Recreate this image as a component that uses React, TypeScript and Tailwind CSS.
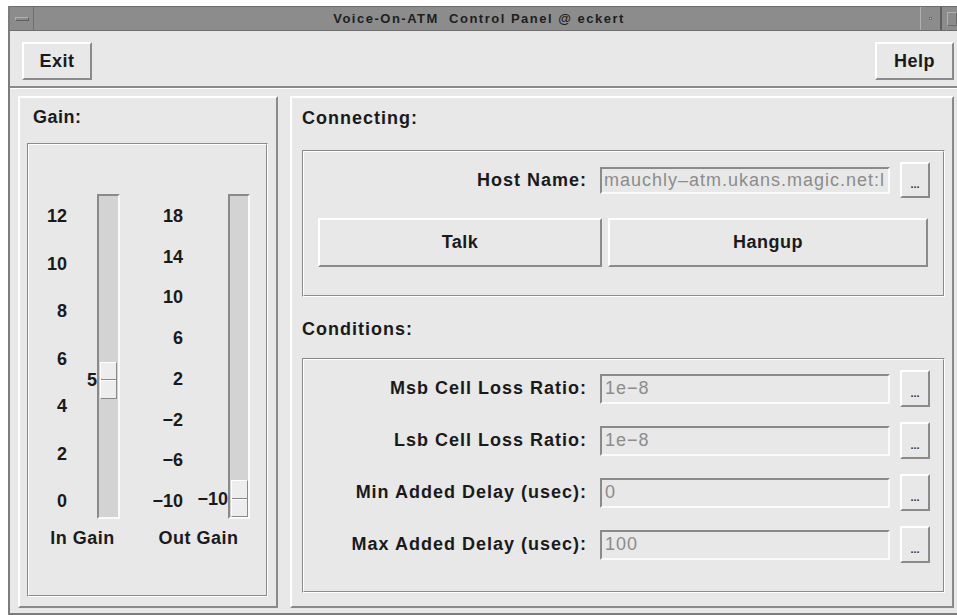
import React from "react";

const raised =
  "border-2 border-t-white border-l-white border-b-[#8a8a8a] border-r-[#8a8a8a]";
const sunken =
  "border-2 border-t-[#8a8a8a] border-l-[#8a8a8a] border-b-[#fafafa] border-r-[#fafafa]";

function Groove({ className = "", children }: { className?: string; children?: React.ReactNode }) {
  return (
    <div className={`border border-t-[#8a8a8a] border-l-[#8a8a8a] border-b-white border-r-white ${className}`}>
      <div className="h-full border border-t-white border-l-white border-b-[#8a8a8a] border-r-[#8a8a8a]">
        {children}
      </div>
    </div>
  );
}

function Trough({
  value,
  min,
  max,
  valueText,
  widthClass,
  thumbClass,
}: {
  value: number;
  min: number;
  max: number;
  valueText: string;
  widthClass: string;
  thumbClass: string;
}) {
  const travel = 321 - 37;
  const top = ((max - value) / (max - min)) * travel;
  return (
    <div className={`relative h-[325px] ${widthClass} ${sunken} bg-[#d3d3d3]`}>
      <div
        className="absolute right-full mr-[2px] h-[37px] flex items-center text-[18px] font-bold leading-none text-[#1a1a1a]"
        style={{ top }}
      >
        {valueText}
      </div>
      <div
        className={`absolute ${thumbClass} h-[37px] bg-[#ededed] border border-t-white border-l-white border-b-[#8a8a8a] border-r-[#8a8a8a] flex flex-col justify-center`}
        style={{ top }}
      >
        <div className="h-[2px] border-t border-t-[#8a8a8a] border-b border-b-white" />
      </div>
    </div>
  );
}

function ScaleLabels({ labels, widthClass }: { labels: string[]; widthClass: string }) {
  return (
    <div className={`${widthClass} mt-[12px] h-[306px] flex flex-col justify-between text-right`}>
      {labels.map((l) => (
        <div key={l} className="leading-[21px] text-[18px] font-bold text-[#1a1a1a]">
          {l}
        </div>
      ))}
    </div>
  );
}

function DotsButton({ h }: { h: string }) {
  return (
    <div className={`ml-[10px] w-[30px] ${h} ${raised} bg-[#e8e8e8] flex items-end justify-center pb-[6px]`}>
      <span className="text-[11px] leading-none font-bold tracking-[0px] text-[#333]">...</span>
    </div>
  );
}

function FieldRow({ label, value }: { label: string; value: string }) {
  return (
    <div className="flex items-center h-[37px]">
      <div className="w-[283px] text-right text-[18px] font-bold tracking-[1px] text-[#1a1a1a] whitespace-nowrap">
        {label}
      </div>
      <div
        className={`ml-[13px] w-[290px] h-[30px] ${sunken} bg-[#e8e8e8] flex items-center pl-[3px] text-[18px] tracking-[1px] text-[#8c8c8c] overflow-hidden whitespace-nowrap`}
      >
        {value}
      </div>
      <DotsButton h="h-[37px]" />
    </div>
  );
}

export default function App() {
  return (
    <div className="w-[957px] h-[615px] bg-white overflow-hidden font-['Liberation_Sans',Arial,sans-serif] pl-[8px] pt-[6px]">
      <div className="w-[949px] h-[609px] flex flex-col bg-[#e8e8e8] border-l-2 border-l-[#7c7c7c]">
        {/* title bar */}
        <div className="h-[25px] flex bg-[#8c8c8c] border-t border-t-[#6e6e6e] border-b border-b-[#6e6e6e]">
          <div className="w-[24px] border-r border-r-[#6e6e6e] flex items-center justify-center">
            <div className="w-[14px] h-[4px] border border-t-[#b0b0b0] border-l-[#b0b0b0] border-b-[#5e5e5e] border-r-[#5e5e5e]" />
          </div>
          <div className="flex-1 flex items-center justify-center pl-[4px]">
            <span className="text-[13px] font-bold tracking-[1.5px] text-[#1e1e1e] whitespace-pre">
              Voice-On-ATM  Control Panel @ eckert
            </span>
          </div>
          <div className="w-[22px] border-l border-l-[#b0b0b0] border-r-2 border-r-[#5e5e5e] flex items-center justify-center">
            <div className="w-[3px] h-[3px] bg-[#d0d0d0] border border-[#707070]" />
          </div>
          <div className="w-[15px] flex items-center justify-end">
            <div className="w-[10px] h-[14px] border border-t-[#b0b0b0] border-l-[#b0b0b0] border-b-[#6a6a6a] border-r-[#6a6a6a]" />
          </div>
        </div>

        {/* toolbar */}
        <div className="h-[55px] flex items-start justify-between pt-[11px] pl-[12px] pr-[3px]">
          <div className={`w-[70px] h-[38px] ${raised} flex items-center justify-center text-[18px] font-bold tracking-[0.5px] text-[#1a1a1a]`}>
            Exit
          </div>
          <div className={`w-[79px] h-[38px] ${raised} flex items-center justify-center text-[18px] font-bold tracking-[0.5px] text-[#1a1a1a]`}>
            Help
          </div>
        </div>
        <div className="h-[3px] border-t-2 border-t-[#8a8a8a] border-b border-b-white" />

        {/* main area */}
        <div className="flex-1 flex gap-[12px] pl-[8px] pr-[3px] pt-[7px] pb-[5px] border-b-2 border-b-[#7c7c7c]">
          {/* gain panel */}
          <div className={`w-[260px] ${raised} flex flex-col px-[7px] pb-[9px]`}>
            <div className="pt-[9px] pl-[6px] leading-[21px] mb-[15px] text-[18px] font-bold tracking-[0.5px] text-[#1a1a1a]">
              Gain:
            </div>
            <Groove className="flex-1 w-[241px]">
              <div className="flex items-start pt-[49px]">
                <ScaleLabels labels={["12", "10", "8", "6", "4", "2", "0"]} widthClass="w-[38px]" />
                <div className="ml-[30px]">
                  <Trough value={5} min={0} max={12} valueText="5" widthClass="w-[23px]" thumbClass="left-[1px] w-[17px]" />
                </div>
                <ScaleLabels
                  labels={["18", "14", "10", "6", "2", "\u22122", "\u22126", "\u221210"]}
                  widthClass="ml-[23px] w-[40px]"
                />
                <div className="ml-[45px]">
                  <Trough value={-10} min={-10} max={18} valueText={"\u221210"} widthClass="w-[22px]" thumbClass="left-[1px] w-[17px]" />
                </div>
              </div>
              <div className="flex mt-[9px] text-[18px] font-bold tracking-[0.5px] leading-[21px] text-[#1a1a1a]">
                <div className="w-[107px] text-center">In Gain</div>
                <div className="w-[125px] text-center">Out Gain</div>
              </div>
            </Groove>
          </div>

          {/* connection panel */}
          <div className={`flex-1 ${raised} flex flex-col pl-[10px] pr-[7px]`}>
            <div className="pt-[10px] leading-[21px] mb-[21px] text-[18px] font-bold tracking-[1px] text-[#1a1a1a]">
              Connecting:
            </div>
            <Groove className="h-[147px]">
              <div className="pt-[10px]">
                <div className="flex items-center h-[36px]">
                  <div className="w-[283px] text-right text-[18px] font-bold tracking-[1px] text-[#1a1a1a]">
                    Host Name:
                  </div>
                  <div
                    className={`ml-[13px] w-[290px] h-[27px] ${sunken} bg-[#e8e8e8] flex items-center pl-[2px] text-[18px] tracking-[1px] text-[#8c8c8c] overflow-hidden whitespace-nowrap`}
                  >
                    mauchly&#8211;atm.ukans.magic.net:l
                  </div>
                  <DotsButton h="h-[36px]" />
                </div>
                <div className="flex mt-[20px] pl-[14px] gap-[6px]">
                  <div className={`w-[284px] h-[49px] ${raised} flex items-center justify-center text-[18px] font-bold tracking-[0.5px] text-[#1a1a1a]`}>
                    Talk
                  </div>
                  <div className={`w-[320px] h-[49px] ${raised} flex items-center justify-center text-[18px] font-bold tracking-[0.5px] text-[#1a1a1a]`}>
                    Hangup
                  </div>
                </div>
              </div>
            </Groove>
            <div className="mt-[22px] leading-[21px] mb-[18px] text-[18px] font-bold tracking-[1px] text-[#1a1a1a]">
              Conditions:
            </div>
            <Groove className="h-[235px]">
              <div className="pt-[10px] flex flex-col gap-[15px]">
                <FieldRow label="Msb Cell Loss Ratio:" value={"1e\u22128"} />
                <FieldRow label="Lsb Cell Loss Ratio:" value={"1e\u22128"} />
                <FieldRow label="Min Added Delay (usec):" value="0" />
                <FieldRow label="Max Added Delay (usec):" value="100" />
              </div>
            </Groove>
          </div>
        </div>
      </div>
    </div>
  );
}
